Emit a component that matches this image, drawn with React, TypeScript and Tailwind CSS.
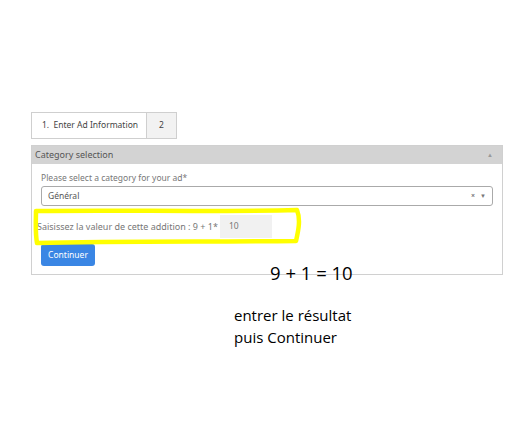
const formFont = { fontFamily: '"Noto Sans", "Liberation Sans", sans-serif' }
const noteFont = { fontFamily: '"Open Sans", "Noto Sans", sans-serif' }

const App = () => {
  return (
    <div className="relative h-[432px] w-[520px] bg-white" style={formFont}>
      <div className="ml-[31px] w-[472px] pt-[112px]">
        {/* Steps */}
        <div className="flex h-[27px] w-[146px] border border-[#cfcfcf] text-[8.5px] text-[#444]">
          <div className="flex flex-1 items-center justify-center border-r border-[#cfcfcf] pl-[2px]">
            1.&nbsp;&nbsp;Enter Ad Information
          </div>
          <div className="flex w-[29px] items-center justify-center bg-[#f2f2f2]">2</div>
        </div>

        {/* Panel */}
        <div className="mt-[6px] border border-[#d0d0d0]">
          <div className="flex h-[18px] items-center justify-between bg-[#d3d3d3] pl-[3px] pr-[9px] text-[9px] text-[#555]">
            <span>Category selection</span>
            <span className="text-[6px] text-[#999]">▲</span>
          </div>
          <div className="px-[9px] pt-[8px] pb-[8px]">
            <div className="text-[8.5px] leading-[12px] text-[#777]">Please select a category for your ad*</div>
            <div className="mt-[2px] flex h-[20px] items-center justify-between rounded-[3px] border border-[#aaa] pl-[6px] pr-[6px] text-[8.5px] text-[#555]">
              <span>Général</span>
              <span className="flex items-center gap-[5px] text-[7px] text-[#777]">
                <span className="font-bold">×</span>
                <span className="text-[6px]">▼</span>
              </span>
            </div>
            <div className="mt-[9px] flex items-center">
              <span className="-ml-[4px] text-[9px] text-[#777]">Saisissez la valeur de cette addition : 9 + 1*</span>
              <div className="ml-[2px] flex h-[23px] w-[52px] items-center bg-[#f1f1f1] pl-[9px] text-[8.5px] text-[#777]">10</div>
            </div>
            <button className="mt-[6px] h-[22px] w-[54px] rounded-[3px] bg-[#3a86e4] text-[8.5px] text-white">
              Continuer
            </button>
          </div>
        </div>
      </div>

      {/* Annotation: yellow highlight */}
      <svg className="absolute left-0 top-0" width="520" height="432" viewBox="0 0 520 432">
        <path
          d="M36 211 C 120 210, 220 212, 297 210 C 301 220, 298 232, 296 241 C 220 242, 120 241, 37 243 C 35 232, 36 220, 36 211 Z"
          fill="none"
          stroke="#ffff00"
          strokeWidth="4.5"
          strokeLinejoin="round"
        />
      </svg>

      <div className="absolute left-[270px] top-[259px] text-[18.5px] text-black" style={noteFont}>
        9 + 1 = 10
      </div>
      <div className="absolute left-[234px] top-[304px] text-[15px] leading-[22px] text-black" style={noteFont}>
        <div>entrer le résultat</div>
        <div>puis Continuer</div>
      </div>
    </div>
  )
}

export default App
